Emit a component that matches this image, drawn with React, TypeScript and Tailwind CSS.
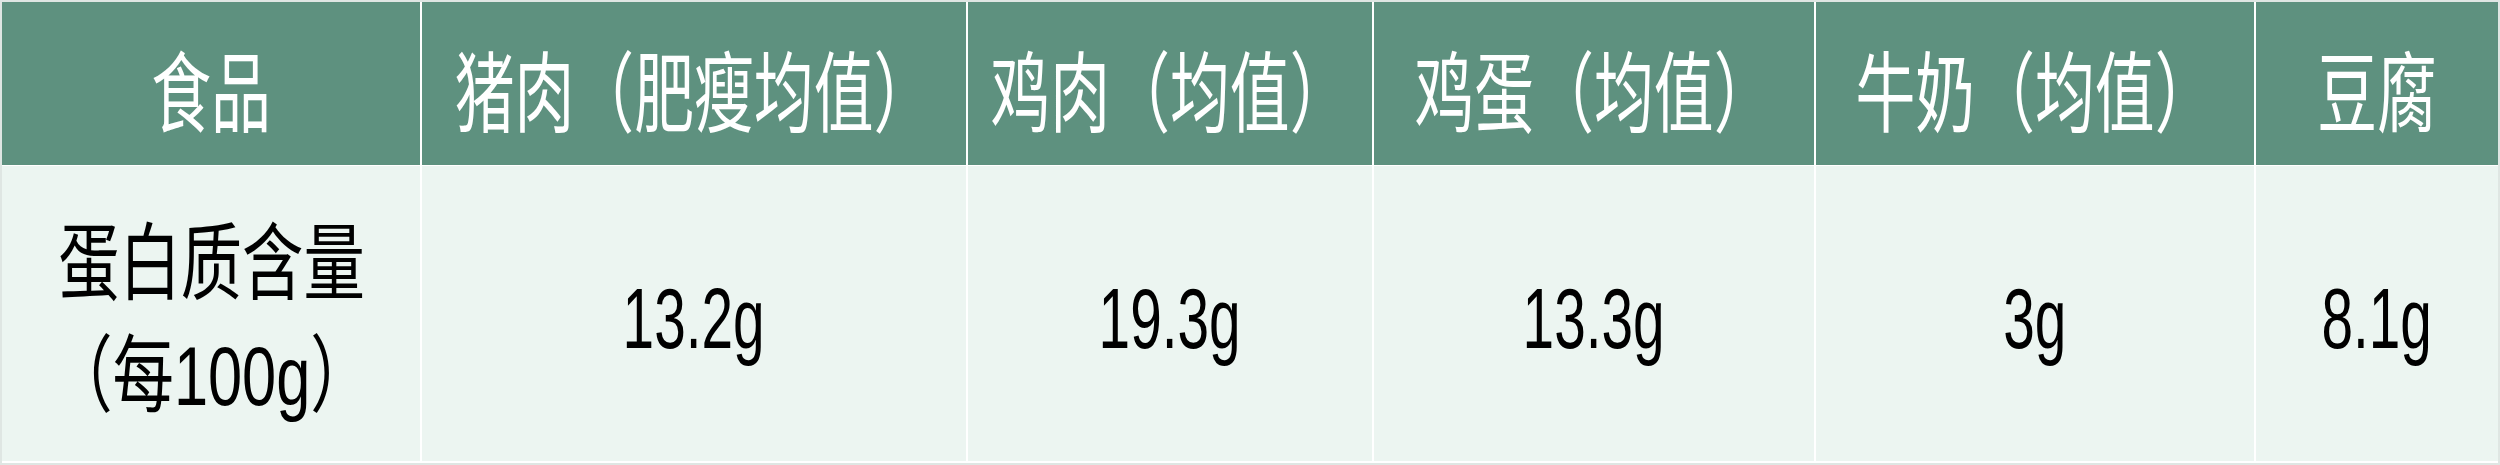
import React from "react";

const headers = ["食品", "猪肉（肥瘦均值）", "鸡肉（均值）", "鸡蛋（均值）", "牛奶（均值）", "豆腐"];
const values = ["13.2g", "19.3g", "13.3g", "3g", "8.1g"];

export default function App() {
  return (
    <div className="w-[2500px] h-[465px] bg-white border-2 border-[#dfe6e3] font-['Noto_Sans_CJK_SC','Noto_Sans_CJK_JP',sans-serif]">
      <div className="grid h-full grid-cols-[418px_544px_404px_440px_438px_242px] grid-rows-[163px_295px] gap-x-[2px] gap-y-[1px]">
        {headers.map((h) => (
          <div key={h} className="flex items-center justify-center overflow-visible bg-[#5e917f] pt-[6px]">
            <span className="inline-block whitespace-nowrap text-[88px] leading-none text-white scale-x-[0.68]">
              {h}
            </span>
          </div>
        ))}
        <div className="flex items-center justify-center bg-[#ecf5f1] pt-[12px]">
          <div className="flex flex-col items-center font-['Liberation_Sans','Noto_Sans_CJK_SC',sans-serif] text-[84px] leading-[112px] text-black scale-x-[0.73]">
            <span className="whitespace-nowrap">蛋白质含量</span>
            <span className="whitespace-nowrap">（每100g）</span>
          </div>
        </div>
        {values.map((v) => (
          <div key={v} className="flex items-center justify-center bg-[#ecf5f1] pt-[8px]">
            <span className="inline-block whitespace-nowrap font-['Liberation_Sans',sans-serif] text-[86px] leading-none text-black scale-x-[0.66]">
              {v}
            </span>
          </div>
        ))}
      </div>
    </div>
  );
}
